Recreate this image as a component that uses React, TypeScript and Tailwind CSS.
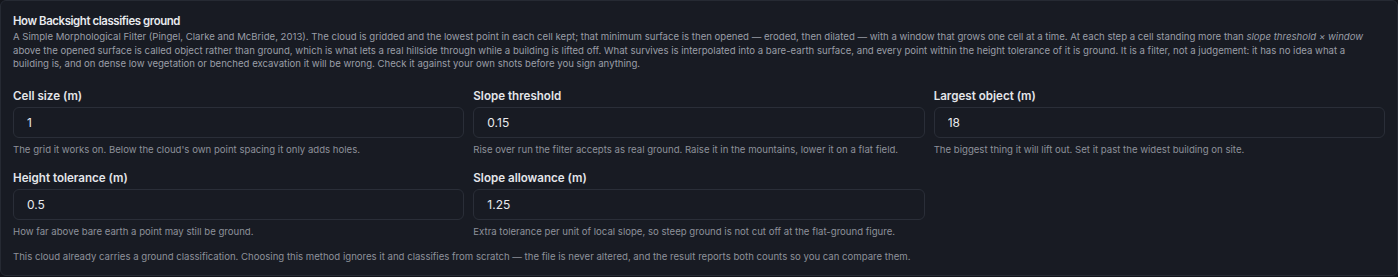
import React from 'react';

interface FieldProps {
  label: string;
  value: string;
  hint: string;
}

const Field = ({ label, value, hint }: FieldProps) => {
  return (
    <div className="flex flex-col">
      <label className="text-[11.6px] leading-4 font-semibold text-[#e4e6ea]">{label}</label>
      <input
        className="mt-[3px] h-[31px] rounded-[6px] border border-[#2a2e38] bg-[#181b23] px-[13px] text-[12px] text-[#e8eaee] outline-none"
        defaultValue={value}
      />
      <p className="mt-[5px] text-[9.6px] leading-[13.5px] text-[#8d919a]">{hint}</p>
    </div>
  );
};

export default function App() {
  return (
    <div className="min-h-[277px] bg-[#13151b] font-['Inter',sans-serif]">
      <div className="rounded-[6px] border border-[#262a33] bg-[#181b23] px-[12px] pt-[11px] pb-[12px]">
        {/* Heading and explanation */}
        <h2 className="text-[11.4px] leading-[18px] font-semibold tracking-[-0.4px] text-[#e8eaee]">
          How Backsight classifies ground
        </h2>
        <p className="text-[9.6px] leading-[13.5px] text-[#9a9ea7]">
          A Simple Morphological Filter (Pingel, Clarke and McBride, 2013). The cloud is gridded and the lowest point in
          each cell kept; that minimum surface is then opened — eroded, then dilated — with a window that grows one cell
          at a time. At each step a cell standing more than <em>slope threshold × window</em> above the opened surface is
          called object rather than ground, which is what lets a real hillside through while a building is lifted off.
          What survives is interpolated into a bare-earth surface, and every point within the height tolerance of it is
          ground. It is a filter, not a judgement: it has no idea what a
          <br />
          building is, and on dense low vegetation or benched excavation it will be wrong. Check it against your own
          shots before you sign anything.
        </p>

        {/* Parameters */}
        <div className="mt-[17.5px] grid grid-cols-3 gap-x-[9px] gap-y-[13.5px]">
          <Field
            label="Cell size (m)"
            value="1"
            hint="The grid it works on. Below the cloud's own point spacing it only adds holes."
          />
          <Field
            label="Slope threshold"
            value="0.15"
            hint="Rise over run the filter accepts as real ground. Raise it in the mountains, lower it on a flat field."
          />
          <Field
            label="Largest object (m)"
            value="18"
            hint="The biggest thing it will lift out. Set it past the widest building on site."
          />
          <Field label="Height tolerance (m)" value="0.5" hint="How far above bare earth a point may still be ground." />
          <Field
            label="Slope allowance (m)"
            value="1.25"
            hint="Extra tolerance per unit of local slope, so steep ground is not cut off at the flat-ground figure."
          />
        </div>

        <p className="mt-[11px] text-[9.6px] leading-[13.5px] text-[#8d919a]">
          This cloud already carries a ground classification. Choosing this method ignores it and classifies from scratch
          — the file is never altered, and the result reports both counts so you can compare them.
        </p>
      </div>
    </div>
  );
}
